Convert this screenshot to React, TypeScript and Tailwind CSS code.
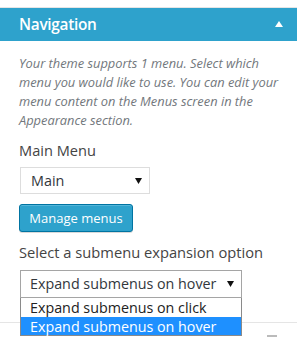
export default function App() {
  return (
    <div className="relative w-[297px] h-[339px] overflow-hidden bg-white font-['Open_Sans',sans-serif]">
      {/* top strip */}
      <div className="h-[8px] border-b border-[#e5e5e5] bg-white" />

      {/* section header */}
      <div className="h-[33px] bg-[#2ea2cc] flex items-center justify-between pl-[19px] pr-[14px]">
        <span className="text-white text-[15.4px] font-semibold leading-none tracking-[-0.3px]">Navigation</span>
        <svg width="8" height="6" viewBox="0 0 8 6" className="mb-[1px]">
          <path d="M4 0 L8 6 L0 6 Z" fill="#fff" />
        </svg>
      </div>

      {/* body */}
      <div className="pl-[19px] pr-[16px] pt-[13px]">
        <p className="text-[12.85px] italic leading-[19px] text-[#72777c]">
          Your theme supports 1 menu. Select which menu you would like to use. You can edit your menu content on the Menus screen in the Appearance section.
        </p>

        <div className="mt-[10px] text-[14.6px] leading-[20px] text-[#444]">Main Menu</div>

        <div className="mt-[7px] ml-[1px] w-[130px] h-[27px] border border-[#ddd] flex items-center justify-between pl-[10px] pr-[7px]">
          <span className="text-[14.4px] text-[#32373c]">Main</span>
          <svg width="7" height="6" viewBox="0 0 7 6">
            <path d="M0 0 L7 0 L3.5 6 Z" fill="#111" />
          </svg>
        </div>

        <button className="mt-[10px] h-[28px] w-[114px] rounded-[3px] bg-[#2ea2cc] border border-[#0074a2] shadow-[inset_0_1px_0_rgba(120,200,230,0.5),0_1px_0_rgba(0,0,0,0.15)] text-white text-[13px] leading-none flex items-center justify-center">
          Manage menus
        </button>

        <div className="mt-[10px] text-[14.7px] leading-[20px] text-[#444] whitespace-nowrap">Select a submenu expansion option</div>

        <div className="relative mt-[8px] ml-[1px] w-[222px]">
          <div className="h-[28px] border border-[#a5a5a5] flex items-center justify-between pl-[9px] pr-[7px]">
            <span className="text-[14.3px] text-[#32373c] whitespace-nowrap">Expand submenus on hover</span>
            <svg width="7" height="6" viewBox="0 0 7 6">
              <path d="M0 0 L7 0 L3.5 6 Z" fill="#111" />
            </svg>
          </div>
          {/* open dropdown list */}
          <div className="absolute left-0 top-full z-10 w-full bg-white border border-t-0 border-[#8a8a8a] text-[14.3px] leading-[19px] whitespace-nowrap">
            <div className="pl-[9px] h-[19px] text-[#222]">Expand submenus on click</div>
            <div className="pl-[9px] h-[18px] bg-[#1e90ff] text-white">Expand submenus on hover</div>
          </div>
        </div>
      </div>

      {/* next section, mostly covered */}
      <div className="mt-[24px] border-t border-[#e5e5e5] h-[20px] flex justify-end pr-[20px] pt-[12px]">
        <div className="w-[10px] h-[2px] bg-[#bbb]" />
      </div>
    </div>
  );
}
